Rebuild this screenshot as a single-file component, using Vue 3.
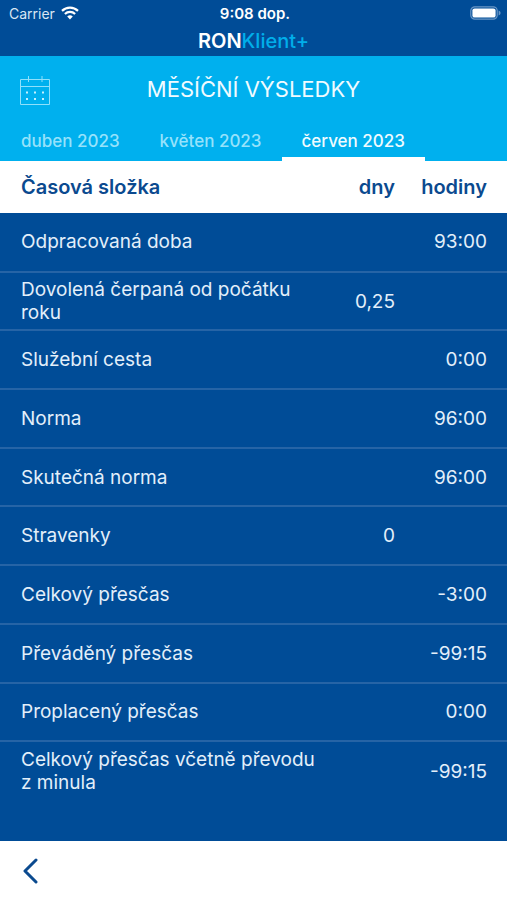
<template>
  <div class="app">
    <header class="top">
      <div class="status">
        <div class="carrier">
          <span>Carrier</span>
          <svg class="wifi" viewBox="0 0 18 14" aria-hidden="true">
            <path d="M1 4.9a11.6 11.6 0 0 1 16 0" />
            <path d="M3.9 8a7.4 7.4 0 0 1 10.2 0" />
            <path class="dot" d="M9 13.4 6.2 10.5a4.1 4.1 0 0 1 5.6 0z" />
          </svg>
        </div>
        <strong class="clock">9:08 dop.</strong>
        <svg class="battery" viewBox="0 0 31 14" aria-hidden="true">
          <rect class="shell" x="0.8" y="0.8" width="26.4" height="12.4" rx="4" />
          <rect class="charge" x="2.4" y="2.4" width="23.2" height="9.2" rx="2.2" />
          <path class="cap" d="M28.6 4.6c2.6.8 2.6 4 0 4.8z" />
        </svg>
      </div>
      <div class="brand">RON<span>Klient+</span></div>
    </header>

    <section class="period">
      <div class="title-row">
        <button type="button" class="calendar" aria-label="Kalendář">
          <svg viewBox="0 0 32 32" aria-hidden="true">
            <path d="M1.5 5.5h29v25h-29zM1.5 12.5h29M9.5 2v6M23 2v6" />
            <path
              class="days"
              d="M8 18.5h0M16 18.5h0M24 18.5h0M8 25h0M16 25h0M24 25h0"
            />
          </svg>
        </button>
        <h1>MĚSÍČNÍ VÝSLEDKY</h1>
      </div>
      <nav class="tabs">
        <button
          v-for="month in months"
          :key="month"
          type="button"
          :class="{ active: month === selected }"
          @click="selected = month"
        >
          {{ month }}
        </button>
      </nav>
    </section>

    <main>
      <table>
        <thead>
          <tr>
            <th scope="col">Časová složka</th>
            <th scope="col" class="days-col">dny</th>
            <th scope="col" class="hours-col">hodiny</th>
          </tr>
        </thead>
        <tbody>
          <tr v-for="row in rows" :key="row.name">
            <td>{{ row.name }}</td>
            <td>{{ row.days }}</td>
            <td>{{ row.hours }}</td>
          </tr>
        </tbody>
      </table>
    </main>

    <footer>
      <button type="button" class="back" aria-label="Zpět">
        <svg viewBox="0 0 16 26" aria-hidden="true">
          <path d="M14 2 3 13l11 11" />
        </svg>
      </button>
    </footer>
  </div>
</template>

<script setup>
import { ref } from "vue";

const months = ["duben 2023", "květen 2023", "červen 2023"];
const selected = ref("červen 2023");

const rows = [
  { name: "Odpracovaná doba", days: "", hours: "93:00" },
  { name: "Dovolená čerpaná od počátku roku", days: "0,25", hours: "" },
  { name: "Služební cesta", days: "", hours: "0:00" },
  { name: "Norma", days: "", hours: "96:00" },
  { name: "Skutečná norma", days: "", hours: "96:00" },
  { name: "Stravenky", days: "0", hours: "" },
  { name: "Celkový přesčas", days: "", hours: "-3:00" },
  { name: "Převáděný přesčas", days: "", hours: "-99:15" },
  { name: "Proplacený přesčas", days: "", hours: "0:00" },
  { name: "Celkový přesčas včetně převodu z\u00a0minula", days: "", hours: "-99:15" },
];
</script>

<style>
body {
  margin: 0;
  background: #004c97;
}
</style>

<style scoped>
.app {
  display: flex;
  flex-direction: column;
  min-height: 100vh;
  background: #004c97;
  color: #e3effa;
  font-family: Inter, "Liberation Sans", sans-serif;
}

button {
  margin: 0;
  padding: 0;
  border: 0;
  background: none;
  color: inherit;
  font: inherit;
  cursor: pointer;
}

svg {
  display: block;
  fill: none;
}

/* Status bar and brand */
.top {
  height: 56px;
  color: #fff;
}

.status {
  display: grid;
  grid-template-columns: 1fr auto 1fr;
  align-items: center;
  height: 26px;
  padding: 0 6px 0 9px;
  font-size: 14px;
}

.carrier {
  display: flex;
  align-items: center;
  gap: 6px;
  color: #d9e6f3;
}

.wifi {
  width: 18px;
  height: 14px;
  stroke: #fff;
  stroke-width: 2.2;
}

.wifi .dot {
  fill: #fff;
  stroke: none;
}

.clock {
  font-size: 15px;
  font-weight: 600;
}

.battery {
  justify-self: end;
  width: 31px;
  height: 14px;
}

.shell {
  stroke: #6a97c6;
  stroke-width: 1.2;
}

.charge {
  fill: #fff;
}

.cap {
  fill: #6a97c6;
}

.brand {
  font-size: 20px;
  font-weight: 600;
  line-height: 30px;
  text-align: center;
}

.brand span {
  color: #00aeea;
  font-weight: 500;
}

/* Month picker */
.period {
  background: #00b0ee;
}

.title-row {
  display: grid;
  grid-template-columns: 32px 1fr 32px;
  align-items: center;
  height: 66px;
  padding: 0 19px;
}

.calendar {
  padding-top: 2px;
}

.calendar svg {
  width: 32px;
  height: 32px;
  stroke: #8fe0fb;
}

.calendar .days {
  stroke: #c4f0fe;
  stroke-width: 2;
  stroke-linecap: square;
}

h1 {
  margin: 0;
  color: #f0fbff;
  font-size: 22px;
  font-weight: 400;
  line-height: 28px;
  text-align: center;
}

.tabs {
  display: flex;
  padding: 0 1px;
}

.tabs button {
  height: 39px;
  padding: 2px 20px 0;
  border-bottom: 4px solid transparent;
  color: #96e2fb;
  font-size: 17px;
  font-weight: 500;
}

.tabs .active {
  border-color: #fff;
  color: #effbff;
}

/* Results */
main {
  flex: 1;
}

table {
  width: 100%;
  height: 639px;
  border-collapse: collapse;
  table-layout: fixed;
  font-size: 19px;
}

thead tr {
  height: 52px;
  background: #fff;
  color: #0b4a8f;
  font-size: 20px;
}

tbody tr {
  height: 58px;
}

th {
  padding: 0;
  font-weight: 600;
  text-align: right;
}

td {
  padding: 0;
  line-height: 23px;
  text-align: right;
}

tr > :first-child {
  padding-left: 21px;
  text-align: left;
}

tr > :last-child {
  padding-right: 20px;
}

.days-col {
  width: 70px;
}

.hours-col {
  width: 92px;
}

tbody tr + tr {
  border-top: 2px solid #2664a6;
}

/* Bottom bar */
footer {
  height: 59px;
  padding: 0 22px;
  background: #fff;
}

.back {
  display: flex;
  align-items: center;
  height: 59px;
}

.back svg {
  width: 16px;
  height: 26px;
  stroke: #0b4a8f;
  stroke-width: 3;
  stroke-linecap: round;
  stroke-linejoin: round;
}
</style>
